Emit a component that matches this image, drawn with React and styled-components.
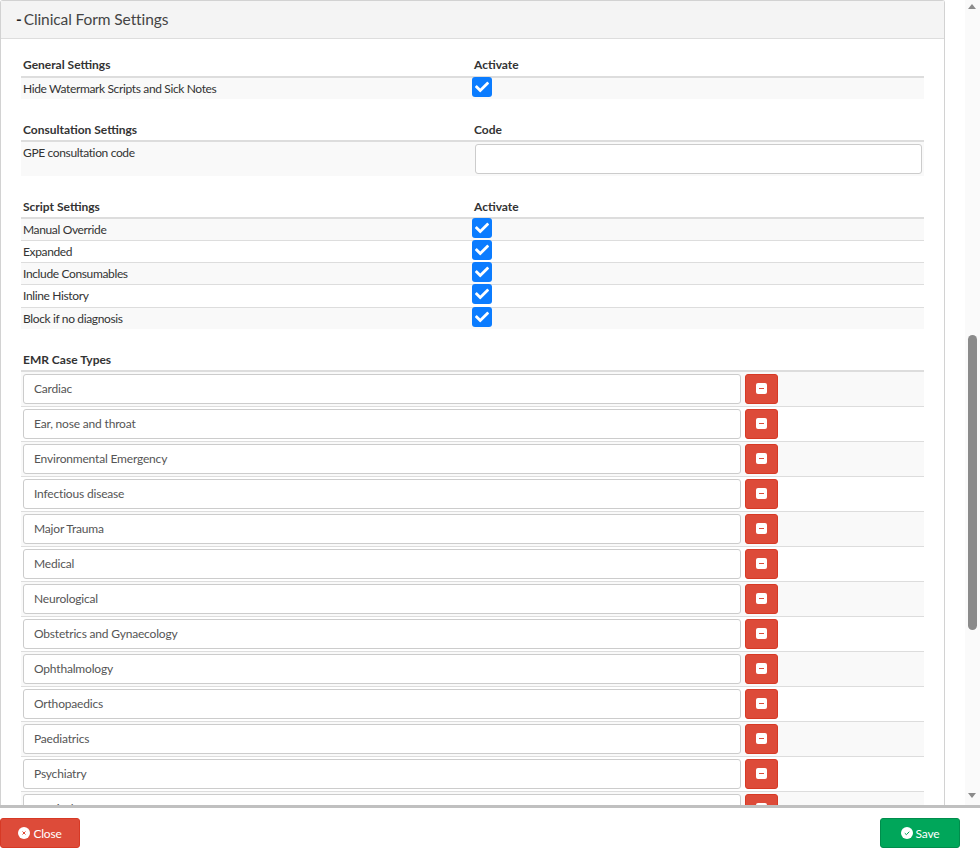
import styled, { createGlobalStyle } from "styled-components";
import { FaCheck } from "react-icons/fa";

const scriptRows = [
  { label: "Manual Override", h: 21 },
  { label: "Expanded", h: 21 },
  { label: "Include Consumables", h: 21 },
  { label: "Inline History", h: 22 },
  { label: "Block if no diagnosis", h: 21 },
];
const caseTypes = [
  "Cardiac",
  "Ear, nose and throat",
  "Environmental Emergency",
  "Infectious disease",
  "Major Trauma",
  "Medical",
  "Neurological",
  "Obstetrics and Gynaecology",
  "Ophthalmology",
  "Orthopaedics",
  "Paediatrics",
  "Psychiatry",
  "Surgical",
];

const GlobalStyle = createGlobalStyle`
  html, body {
    margin: 0;
    padding: 0;
    height: 100%;
    overflow: hidden;
    background: #fff;
  }
  body {
    font-family: Lato, "Liberation Sans", sans-serif;
    font-size: 12px;
    color: #333;
  }
`;

const Page = styled.div`
  width: 980px;
  height: 854px;
  display: flex;
  flex-direction: column;
`;
const Body = styled.div`
  height: 805px;
  display: flex;
  overflow: hidden;
`;
const Content = styled.div`
  width: 965px;
  overflow: hidden;
`;
const Card = styled.section`
  width: 945px;
  box-sizing: border-box;
  border: 1px solid #d2d2d2;
  border-bottom: 0;
  border-radius: 3px 3px 0 0;
`;
const CardHeader = styled.h3`
  margin: 0;
  height: 38px;
  box-sizing: border-box;
  padding: 0 15px 1px;
  display: flex;
  align-items: center;
  gap: 2px;
  background: #f4f4f4;
  border-bottom: 1px solid #ddd;
  font-size: 15.5px;
  font-weight: 400;
  letter-spacing: -0.1px;
  color: #444;
`;
const Dash = styled.b`
  color: #222;
`;
const CardBody = styled.div`
  padding: 20px 20px 0;
`;
const Table = styled.div`
  margin-bottom: ${(p) => p.$gap}px;
`;
const HeadRow = styled.div`
  display: grid;
  grid-template-columns: 451px 1fr;
  height: 17px;
  padding: 0 2px;
  border-bottom: 2px solid #ddd;
  font-weight: 700;
  color: #333;
  line-height: ${(p) => p.$lh || 14}px;
`;
const Row = styled.div`
  display: grid;
  grid-template-columns: 451px 1fr;
  align-items: start;
  height: ${(p) => p.$h}px;
  padding: 0 2px;
  line-height: 21px;
  letter-spacing: -0.36px;
  background: ${(p) => (p.$odd ? "#f9f9f9" : "#fff")};
  border-top: ${(p) => (p.$line ? "1px solid #ddd" : "0")};
`;
const Check = styled.span`
  width: 20px;
  height: 20px;
  margin: -1px 0 0 -2px;
  border-radius: 3px;
  background: #0b7cff;
  color: #fff;
  display: flex;
  align-items: center;
  justify-content: center;
  font-size: 14px;
`;
const CodeInput = styled.input`
  width: 447px;
  height: 30px;
  box-sizing: border-box;
  margin: 2px 0 0 1px;
  border: 1px solid #ccc;
  border-radius: 3px;
  background: #fff;
`;
const CaseRow = styled.div`
  display: flex;
  align-items: flex-start;
  gap: 4px;
  height: 32px;
  padding: 2px 2px 0;
  background: ${(p) => (p.$odd ? "#f9f9f9" : "#fff")};
  border-top: ${(p) => (p.$line ? "1px solid #ddd" : "0")};
`;
const CaseInput = styled.input`
  width: 718px;
  height: 30px;
  box-sizing: border-box;
  padding: 0 10px 2px;
  border: 1px solid #ccc;
  border-radius: 3px;
  background: #fff;
  font: inherit;
  letter-spacing: -0.18px;
  color: #555;
`;
const RemoveButton = styled.button`
  width: 33px;
  height: 30px;
  padding: 0 0 1px;
  border: 1px solid #d73925;
  border-radius: 3px;
  background: #dd4b39;
  display: flex;
  align-items: center;
  justify-content: center;
`;
const ScrollTrack = styled.div`
  width: 15px;
  background: #fafafa;
  display: flex;
  flex-direction: column;
  align-items: center;
  position: relative;
`;
const Thumb = styled.div`
  width: 9px;
  height: 295px;
  margin-top: 335px;
  border-radius: 5px;
  background: #8b8b8b;
`;
const Arrow = styled.div`
  position: absolute;
  left: 3px;
  ${(p) => (p.$up ? "top: 4px;" : "bottom: 7px;")}
  border-left: 4.5px solid transparent;
  border-right: 4.5px solid transparent;
  ${(p) => (p.$up ? "border-bottom" : "border-top")}: 5px solid #8b8b8b;
`;
const Footer = styled.footer`
  flex: 1;
  border-top: 3px solid #c0c0c0;
  padding: 10px 20px 0 0;
  display: flex;
  justify-content: space-between;
  align-items: flex-start;
`;
const FooterButton = styled.button`
  width: 80px;
  height: 30px;
  padding: 0;
  border: 1px solid ${(p) => p.$border};
  border-radius: 3px;
  background: ${(p) => p.$bg};
  color: #fff;
  display: flex;
  align-items: center;
  justify-content: center;
  gap: 3px;
  font: inherit;
  font-size: 12px;
  letter-spacing: -0.2px;
`;

const Checked = () => (
  <Check>
    <FaCheck />
  </Check>
);

const MinusIcon = () => (
  <svg width="11" height="11" viewBox="0 0 11 11">
    <rect width="11" height="11" rx="2" fill="#fff" />
    <rect x="3" y="5" width="5" height="1" fill="#dd4b39" />
  </svg>
);

const CloseIcon = () => (
  <svg width="12" height="12" viewBox="0 0 12 12">
    <circle cx="6" cy="6" r="6" fill="#fff" />
    <path d="M4.5 4.5l3 3M7.5 4.5l-3 3" stroke="#dd4b39" strokeWidth="1" />
  </svg>
);

const SaveIcon = () => (
  <svg width="12" height="12" viewBox="0 0 12 12">
    <circle cx="6" cy="6" r="6" fill="#fff" />
    <path d="M3.8 6.2l1.6 1.5 2.9-3" fill="none" stroke="#00a65a" strokeWidth="1" />
  </svg>
);

export default function App() {
  return (
    <Page>
      <GlobalStyle />
      <Body>
        <Content>
          <Card>
            <CardHeader>
              <Dash>-</Dash>Clinical Form Settings
            </CardHeader>
            <CardBody>
              <Table $gap={24}>
                <HeadRow $lh={12}>
                  <span>General Settings</span>
                  <span>Activate</span>
                </HeadRow>
                <Row $odd $h={21}>
                  <span>Hide Watermark Scripts and Sick Notes</span>
                  <Checked />
                </Row>
              </Table>
              <Table $gap={24}>
                <HeadRow>
                  <span>Consultation Settings</span>
                  <span>Code</span>
                </HeadRow>
                <Row $odd $h={34}>
                  <span>GPE consultation code</span>
                  <CodeInput />
                </Row>
              </Table>
              <Table $gap={24}>
                <HeadRow>
                  <span>Script Settings</span>
                  <span>Activate</span>
                </HeadRow>
                {scriptRows.map((row, i) => (
                  <Row key={row.label} $odd={i % 2 === 0} $line={i > 0} $h={row.h}>
                    <span>{row.label}</span>
                    <Checked />
                  </Row>
                ))}
              </Table>
              <Table $gap={0}>
                <HeadRow>
                  <span>EMR Case Types</span>
                </HeadRow>
                {caseTypes.map((label, i) => (
                  <CaseRow key={label} $odd={i % 2 === 0} $line={i > 0}>
                    <CaseInput defaultValue={label} />
                    <RemoveButton>
                      <MinusIcon />
                    </RemoveButton>
                  </CaseRow>
                ))}
              </Table>
            </CardBody>
          </Card>
        </Content>
        <ScrollTrack>
          <Arrow $up />
          <Thumb />
          <Arrow />
        </ScrollTrack>
      </Body>
      <Footer>
        <FooterButton $bg="#dd4b39" $border="#d73925">
          <CloseIcon /> Close
        </FooterButton>
        <FooterButton $bg="#00a65a" $border="#008d4c">
          <SaveIcon /> Save
        </FooterButton>
      </Footer>
    </Page>
  );
}
